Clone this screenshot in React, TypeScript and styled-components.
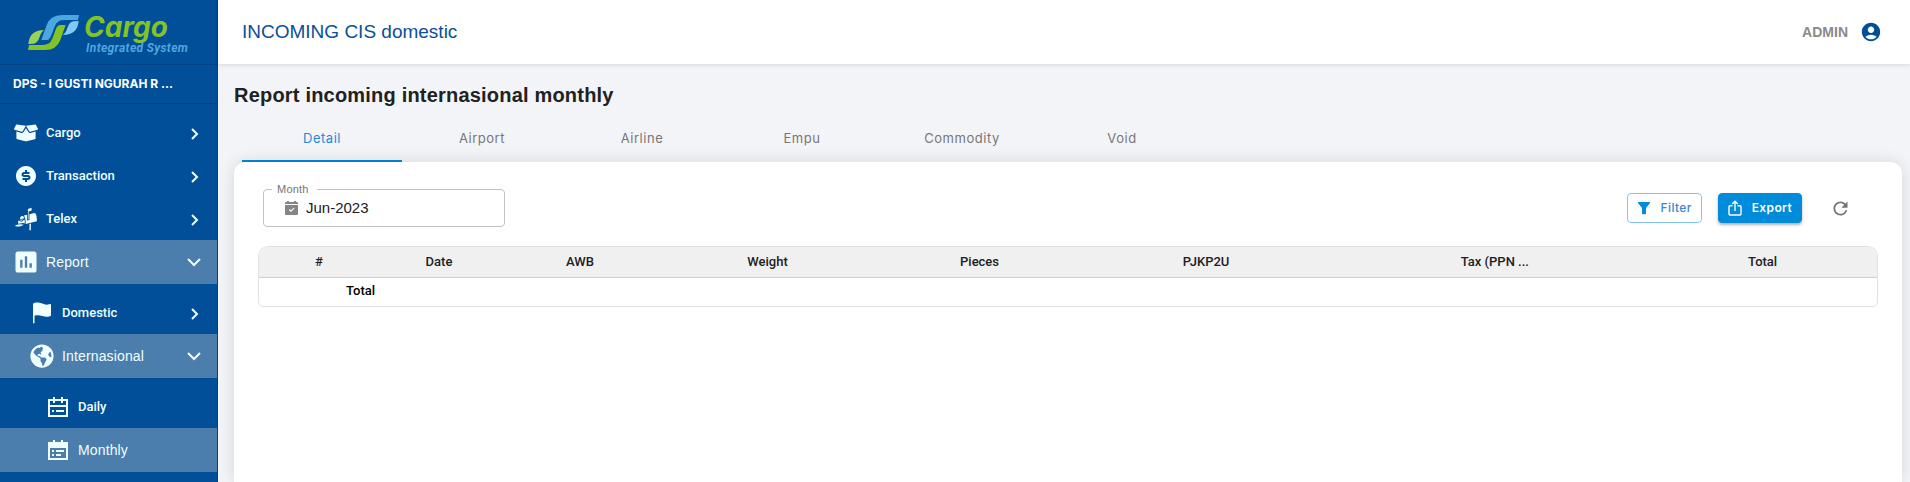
import React, { useState } from 'react';
import styled, { createGlobalStyle } from 'styled-components';
import { FaBoxOpen, FaGlobeAmericas } from 'react-icons/fa';
import { RiMoneyDollarCircleFill } from 'react-icons/ri';
import { GiMailbox } from 'react-icons/gi';
import { IoFlag } from 'react-icons/io5';
import { MdAccountCircle, MdAssessment, MdRefresh } from 'react-icons/md';

const sans = '"Liberation Sans", Arial, sans-serif';
const inter = 'Inter, "Liberation Sans", sans-serif';
const roboto = 'Roboto, "Liberation Sans", sans-serif';

const GlobalStyle = createGlobalStyle`
  *, *::before, *::after { box-sizing: border-box; }
  body {
    margin: 0;
    background: #f3f4f8;
    color: #212121;
    font-family: ${sans};
  }
  button, input { font: inherit; }
`;

/* ---------- shell ---------- */

const Shell = styled.div`
  display: flex;
  min-height: 100vh;
`;

const Sidebar = styled.aside`
  flex: 0 0 218px;
  background: #004f98;
  border-right: 1px solid #00417f;
`;

const Brand = styled.a`
  display: flex;
  height: 65px;
  padding: 14px 0 0 28px;
  gap: 4px;
  border-bottom: 1px solid #004483;
  text-decoration: none;
`;

const BrandMark = styled.svg`
  width: 52px;
  height: 38px;
  flex: none;
`;

const BrandText = styled.span`
  display: flex;
  flex-direction: column;
  font-style: italic;
  font-weight: 700;
  white-space: nowrap;
`;

const BrandName = styled.span`
  font-family: Inter, sans-serif;
  font-size: 28px;
  line-height: 26px;
  color: #83c326;
`;

const BrandTag = styled.span`
  padding-left: 2px;
  font-family: Roboto, sans-serif;
  font-size: 12px;
  line-height: 16px;
  letter-spacing: 0.03em;
  color: #4fa6e0;
`;

const Station = styled.div`
  height: 39px;
  padding-left: 13px;
  border-bottom: 1px solid #004483;
  font: 700 12px/38px ${inter};
  color: #fff;
  white-space: nowrap;
`;

const MenuList = styled.ul`
  margin: 0;
  padding: 7px 0 0;
  list-style: none;
`;

const MenuLink = styled.a<{ $level: number; $active?: boolean }>`
  display: flex;
  align-items: center;
  height: ${(p) => (p.$active ? 44 : 43)}px;
  padding: 0 12px 0 ${(p) => 12 + p.$level * 16}px;
  background: ${(p) => (p.$active ? '#4b7dad' : 'transparent')};
  color: #f0ffff;
  font-family: ${(p) => (p.$active ? sans : roboto)};
  font-size: ${(p) => (p.$active ? 14 : 13)}px;
  font-weight: ${(p) => (p.$active ? 400 : 500)};
  line-height: 20px;
  letter-spacing: ${(p) => (p.$active ? '0.01em' : 'normal')};
  text-decoration: none;
`;

const MenuIcon = styled.span`
  display: flex;
  justify-content: center;
  width: 28px;
  margin-right: 6px;
`;

const MenuLabel = styled.span`
  flex: 1;
`;

const Chevron = styled.svg`
  width: 22px;
  height: 22px;
  fill: none;
  stroke: #f0ffff;
  stroke-width: 2;
`;

/* ---------- main ---------- */

const Main = styled.div`
  flex: 1;
  min-width: 0;
  display: flex;
  flex-direction: column;
`;

const TopBar = styled.header`
  display: flex;
  align-items: center;
  justify-content: space-between;
  height: 64px;
  padding: 0 28px 0 24px;
  background: #fff;
  box-shadow: 0 1px 4px rgba(0, 0, 0, 0.12);
`;

const AppTitle = styled.div`
  font-size: 19px;
  line-height: 24px;
  color: #0b4f95;
`;

const Account = styled.button`
  display: flex;
  align-items: center;
  gap: 12px;
  padding: 0;
  border: 0;
  background: none;
  font-size: 14px;
  font-weight: 700;
  color: #8a8a8a;
  svg { color: #004f98; }
`;

const Content = styled.main`
  flex: 1;
  display: flex;
  flex-direction: column;
  padding: 16px 8px 0 16px;
`;

const PageTitle = styled.h1`
  margin: 0;
  font-size: 20px;
  line-height: 30px;
  letter-spacing: 0.01em;
`;

const Tabs = styled.div`
  display: flex;
  margin-top: 4px;
  padding: 0 8px;
`;

const Tab = styled.button<{ $active: boolean }>`
  width: 160px;
  height: 48px;
  padding: 2px 0 0;
  border: 0;
  border-bottom: 2px solid ${(p) => (p.$active ? '#008bdb' : 'transparent')};
  background: none;
  font: 400 13px/20px ${inter};
  letter-spacing: 0.04em;
  color: ${(p) => (p.$active ? '#1a8bdb' : '#777')};
`;

const Card = styled.section`
  flex: 1;
  padding: 21px 24px 0;
  border-radius: 12px 12px 0 0;
  background: #fff;
  box-shadow: 0 0 16px rgba(0, 0, 0, 0.12);
`;

const Toolbar = styled.div`
  display: flex;
  align-items: flex-end;
  justify-content: space-between;
  padding: 0 16px 0 5px;
`;

const Field = styled.fieldset`
  width: 242px;
  min-width: 0;
  height: 44px;
  margin: 0;
  padding: 0 21px;
  border: 1px solid #c2c2c2;
  border-radius: 4px;
`;

const Legend = styled.legend`
  margin-left: -13px;
  padding: 0 8px 0 5px;
  font-size: 11px;
  line-height: 12px;
  letter-spacing: 0.02em;
  color: #757575;
`;

const FieldRow = styled.div`
  display: flex;
  align-items: center;
  gap: 8px;
  height: 26px;
`;

const MonthInput = styled.input`
  min-width: 0;
  flex: 1;
  padding: 0;
  border: 0;
  outline: 0;
  background: none;
  font-size: 15px;
  line-height: 20px;
  color: #212121;
`;

const Actions = styled.div`
  display: flex;
  align-items: center;
  gap: 16px;
  padding-bottom: 4px;
`;

const ActionButton = styled.button<{ $filled?: boolean }>`
  display: flex;
  align-items: center;
  gap: 10px;
  height: 30px;
  padding: 0 9px;
  border: 1px solid ${(p) => (p.$filled ? '#008bdb' : '#80c5ed')};
  border-radius: 4px;
  background: ${(p) => (p.$filled ? '#008bdb' : '#fff')};
  box-shadow: ${(p) => (p.$filled ? '0 2px 3px rgba(0, 0, 0, 0.3)' : 'none')};
  font: ${(p) => (p.$filled ? 600 : 500)} 12px/16px ${inter};
  letter-spacing: 0.03em;
  color: ${(p) => (p.$filled ? '#fff' : '#3a86d6')};
`;

const RefreshButton = styled.button`
  display: flex;
  align-items: center;
  justify-content: center;
  width: 44px;
  height: 30px;
  padding: 0;
  border: 0;
  background: none;
  color: #757575;
`;

const Grid = styled.div`
  margin-top: 19px;
  border: 1px solid #e0e0e0;
  border-radius: 10px 10px 5px 5px;
  overflow: hidden;
`;

const Table = styled.table`
  width: 100%;
  table-layout: fixed;
  border-spacing: 0;
  font: 500 13px/20px ${roboto};
`;

const Th = styled.th`
  height: 31px;
  padding: 0;
  border-bottom: 1px solid #cfcfcf;
  background: #f0f0f0;
  font-weight: 500;
  text-align: center;
  &:last-child { padding-right: 14px; }
`;

const Td = styled.td`
  height: 28px;
  padding: 0 0 2px;
  color: #000;
`;

const TotalCell = styled(Td)`
  padding-left: 87px;
`;

/* ---------- icons ---------- */

const ChevronIcon = ({ open }: { open?: boolean }) => (
  <Chevron viewBox="0 0 22 22" aria-hidden="true">
    <path d={open ? 'M5 8l6 6 6-6' : 'M9 7l5 5-5 5'} />
  </Chevron>
);

const CalendarIcon = ({ filled }: { filled?: boolean }) => (
  <svg width="20" height="20" viewBox="0 0 20 20" fill="#f0ffff" aria-hidden="true">
    {filled ? (
      <path fillRule="evenodd" d="M5 0h2v2h6V0h2v2h5v18H0V2h5zM2 8v10h16V8z" />
    ) : (
      <path fillRule="evenodd" d="M5 0h2v2h6V0h2v2h5v18H0V2h5zM2 4v4h16V4h-3v2h-2V4H7v2H5V4zM2 10v8h16v-8z" />
    )}
    {filled ? (
      <path d="M4 10h2v2H4zM8 10h8v2H8zM4 14h2v2H4zM8 14h5v2H8z" />
    ) : (
      <path d="M4 13h2v2H4zM8 13h8v2H8z" />
    )}
  </svg>
);

const MonthIcon = () => (
  <svg width="13" height="14" viewBox="0 0 13 14" aria-hidden="true">
    <path d="M2 0h2v1h5V0h2v1h1a1 1 0 0 1 1 1v1H0V2a1 1 0 0 1 1-1h1z" fill="#858585" />
    <path d="M0 4h13v9a1 1 0 0 1-1 1H1a1 1 0 0 1-1-1z" fill="#858585" />
    <path d="M4.300 8.500l1.700 1.700 3-3" fill="none" stroke="#fff" strokeWidth="1.200" />
  </svg>
);

const FunnelIcon = () => (
  <svg width="14" height="14" viewBox="0 0 14 14" fill="#008bdb" aria-hidden="true">
    <path d="M1.500 1h11q1 .3.300 1.300L9 7v5.500q0 .8-.8.800H5.800Q5 13.300 5 12.500V7L1.200 2.300Q.500 1.300 1.500 1z" />
  </svg>
);

const ShareIcon = () => (
  <svg width="14" height="16" viewBox="0 0 14 16" fill="none" stroke="#fff" strokeWidth="1.400" aria-hidden="true">
    <path d="M4.500 5.700H2q-1 0-1 1V14q0 1 1 1h10q1 0 1-1V6.700q0-1-1-1H9.500M7 11V2M4.200 4L7 1.200 9.800 4" />
  </svg>
);

const Logo = () => {
  const half = (ribbon: string, leaf: string) => (
    <>
      <path fill={ribbon} d="M124 123L140 78Q151 48 186 48H237L234 63H192Q172 63 165 80L154 109Q149 123 140 123Z" />
      <path fill={leaf} d="M236 66Q234 86 224 96Q212 108 188 108Q196 104 201 90Q207 69 220 67Z" />
    </>
  );
  return (
    <BrandMark viewBox="84 45 156 114" aria-hidden="true">
      {half('#4ba7e1', '#80c8f6')}
      <g transform="rotate(180 160.500 100.500)">{half('#83c326', '#9ad158')}</g>
    </BrandMark>
  );
};

/* ---------- data ---------- */

type Item = {
  label: string;
  icon: React.ReactNode;
  active?: boolean;
  leaf?: boolean;
  children?: Item[];
};

const menu: Item[] = [
  { label: 'Cargo', icon: <FaBoxOpen size={24} /> },
  { label: 'Transaction', icon: <RiMoneyDollarCircleFill size={24} /> },
  { label: 'Telex', icon: <GiMailbox size={24} /> },
  {
    label: 'Report',
    icon: <MdAssessment size={28} />,
    active: true,
    children: [
      { label: 'Domestic', icon: <IoFlag size={24} /> },
      {
        label: 'Internasional',
        icon: <FaGlobeAmericas size={24} />,
        active: true,
        children: [
          { label: 'Daily', icon: <CalendarIcon />, leaf: true },
          { label: 'Monthly', icon: <CalendarIcon filled />, leaf: true, active: true },
        ],
      },
    ],
  },
];

const tabs = ['Detail', 'Airport', 'Airline', 'Empu', 'Commodity', 'Void'];

const columns: [string, string][] = [
  ['#', '120px'],
  ['Date', '120px'],
  ['AWB', '10%'],
  ['Weight', '13.200%'],
  ['Pieces', '13%'],
  ['PJKP2U', '15%'],
  ['Tax (PPN ...', '20.700%'],
  ['Total', 'auto'],
];

const Menu = ({ items, level = 0 }: { items: Item[]; level?: number }) => (
  <MenuList>
    {items.map((item) => (
      <li key={item.label}>
        <MenuLink href="#" $level={level} $active={item.active}>
          <MenuIcon>{item.icon}</MenuIcon>
          <MenuLabel>{item.label}</MenuLabel>
          {!item.leaf && <ChevronIcon open={item.active} />}
        </MenuLink>
        {item.children && <Menu items={item.children} level={level + 1} />}
      </li>
    ))}
  </MenuList>
);

export default function App() {
  const [tab, setTab] = useState('Detail');
  return (
    <Shell>
      <GlobalStyle />
      <Sidebar>
        <Brand href="#">
          <Logo />
          <BrandText>
            <BrandName>Cargo</BrandName>
            <BrandTag>Integrated System</BrandTag>
          </BrandText>
        </Brand>
        <Station>DPS - I GUSTI NGURAH R ...</Station>
        <nav>
          <Menu items={menu} />
        </nav>
      </Sidebar>
      <Main>
        <TopBar>
          <AppTitle>INCOMING CIS domestic</AppTitle>
          <Account type="button">
            ADMIN
            <MdAccountCircle size={22} />
          </Account>
        </TopBar>
        <Content>
          <PageTitle>Report incoming internasional monthly</PageTitle>
          <Tabs role="tablist">
            {tabs.map((name) => (
              <Tab
                key={name}
                type="button"
                role="tab"
                aria-selected={tab === name}
                $active={tab === name}
                onClick={() => setTab(name)}
              >
                {name}
              </Tab>
            ))}
          </Tabs>
          <Card>
            <Toolbar>
              <Field>
                <Legend>
                  <label htmlFor="month">Month</label>
                </Legend>
                <FieldRow>
                  <MonthIcon />
                  <MonthInput id="month" defaultValue="Jun-2023" />
                </FieldRow>
              </Field>
              <Actions>
                <ActionButton type="button">
                  <FunnelIcon />
                  Filter
                </ActionButton>
                <ActionButton type="button" $filled>
                  <ShareIcon />
                  Export
                </ActionButton>
                <RefreshButton type="button" aria-label="Refresh">
                  <MdRefresh size={21} />
                </RefreshButton>
              </Actions>
            </Toolbar>
            <Grid>
              <Table>
                <colgroup>
                  {columns.map(([name, width]) => (
                    <col key={name} style={{ width }} />
                  ))}
                </colgroup>
                <thead>
                  <tr>
                    {columns.map(([name]) => (
                      <Th key={name} scope="col">
                        {name}
                      </Th>
                    ))}
                  </tr>
                </thead>
                <tbody>
                  <tr>
                    <TotalCell colSpan={2}>Total</TotalCell>
                    {columns.slice(2).map(([name]) => (
                      <Td key={name} />
                    ))}
                  </tr>
                </tbody>
              </Table>
            </Grid>
          </Card>
        </Content>
      </Main>
    </Shell>
  );
}
